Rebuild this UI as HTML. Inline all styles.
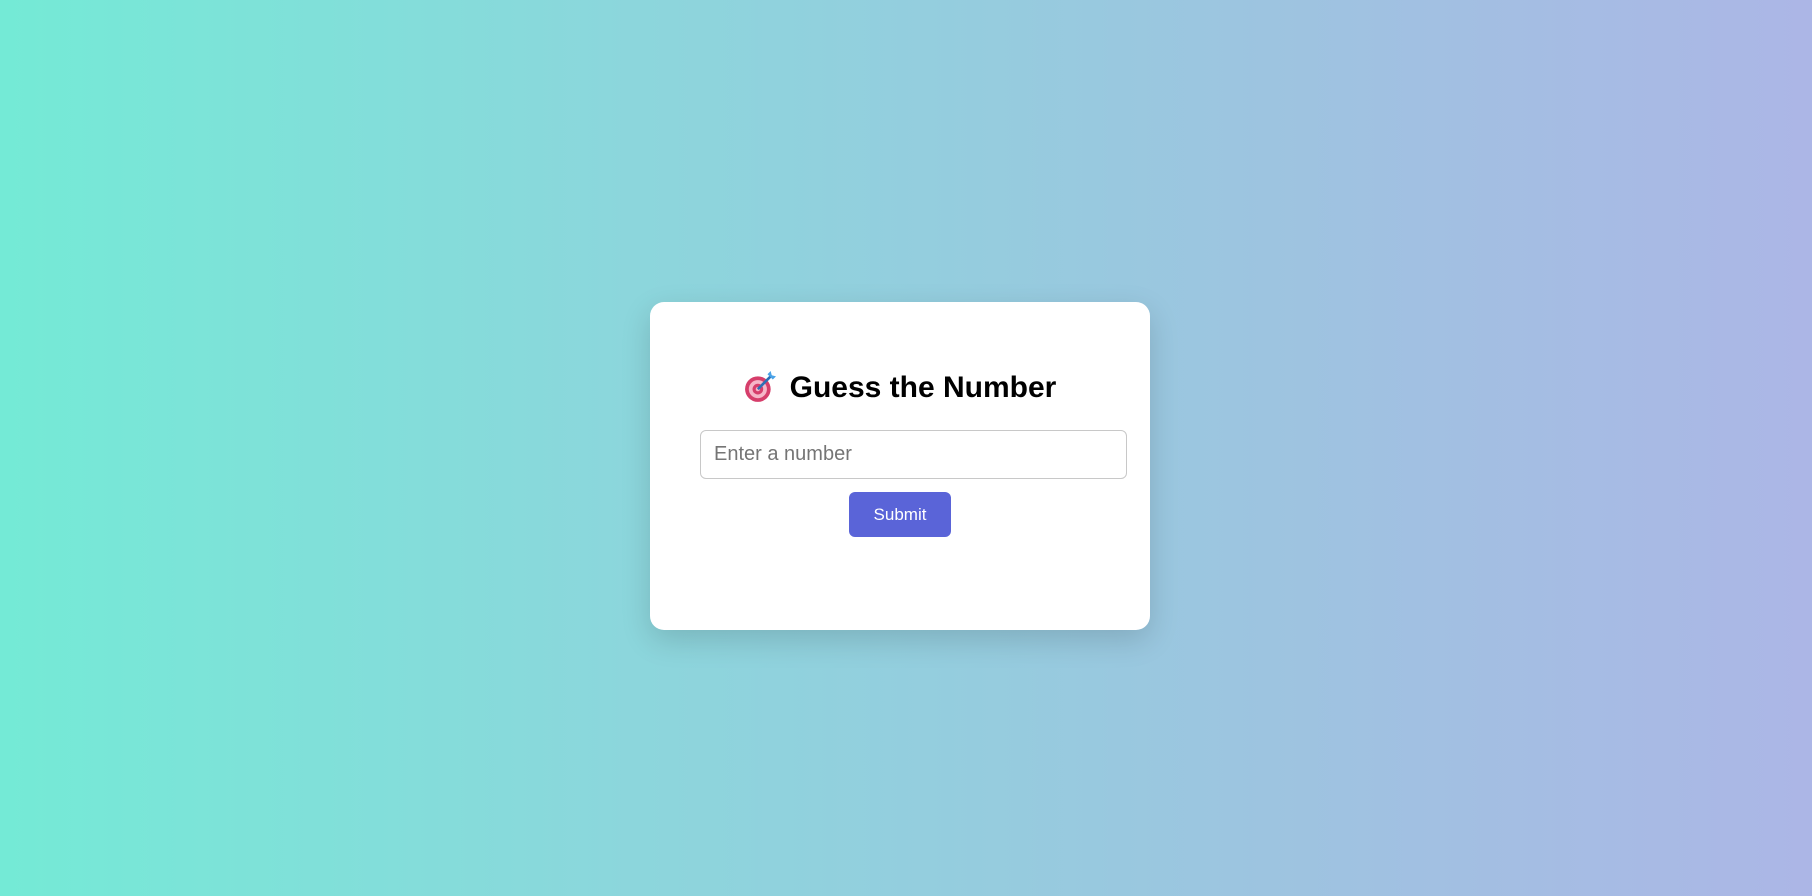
<!DOCTYPE html>
<html><head><style>
html,body{margin:0;width:1812px;height:896px;overflow:hidden}
body{background:linear-gradient(to right,#74ead6,#8cd6dc 35%,#9dc4e0 70%,#acb6e6);font-family:"Liberation Sans",sans-serif;position:relative}
.card{position:absolute;left:650px;top:302px;width:500px;height:328px;background:#fff;border-radius:14px;box-shadow:0 10px 30px rgba(0,0,0,0.15)}
.title{position:absolute;left:0;width:500px;top:69px;text-align:center;font-size:30px;font-weight:bold;color:#000;white-space:nowrap}
.title svg{vertical-align:-6px;margin-right:14px}
.input{position:absolute;left:50px;top:128px;width:427px;height:49px;border:1px solid #c8c8c8;border-radius:6px;box-sizing:border-box;font-size:20px;color:#757575;padding:12px 13px;line-height:22px}
.btn{position:absolute;left:199px;top:190px;width:102px;height:45px;background:#5a64d8;border-radius:6px;color:#fff;font-size:17px;text-align:center;line-height:45px}
</style></head><body>
<div class="card">
<div class="title"><svg width="32" height="32" viewBox="0 0 30 30"><circle cx="13" cy="17" r="12" fill="#d63e6b"/><circle cx="13" cy="17" r="8.5" fill="#f5b6c8"/><circle cx="13" cy="17" r="5" fill="#d63e6b"/><circle cx="13" cy="17" r="2" fill="#f5b6c8"/><path d="M13 17 L26 4" stroke="#2d6fb5" stroke-width="2.5"/><path d="M22 3 l3-3 1 4 4 1-3 3z" fill="#4aa3e8"/></svg>Guess the Number</div>
<div class="input">Enter a number</div>
<div class="btn">Submit</div>
</div>
</body></html>
